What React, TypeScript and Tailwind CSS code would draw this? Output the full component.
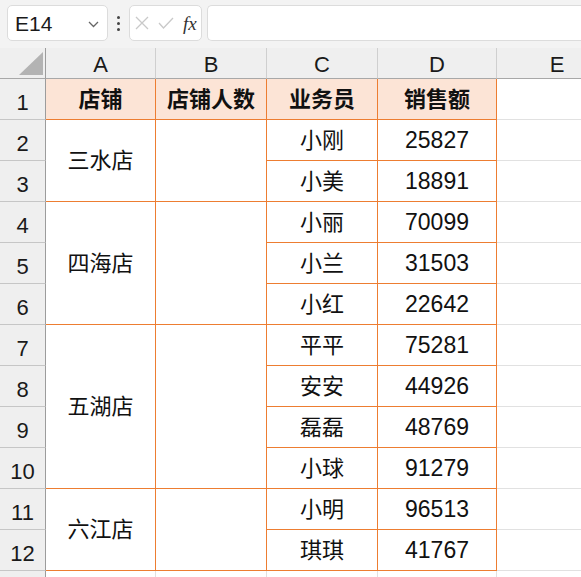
import React from 'react';

type Group = { store: string; people: [string, number][] };

const groups: Group[] = [
  { store: '三水店', people: [['小刚', 25827], ['小美', 18891]] },
  { store: '四海店', people: [['小丽', 70099], ['小兰', 31503], ['小红', 22642]] },
  { store: '五湖店', people: [['平平', 75281], ['安安', 44926], ['磊磊', 48769], ['小球', 91279]] },
  { store: '六江店', people: [['小明', 96513], ['琪琪', 41767]] },
];

const spanClass: Record<number, string> = {
  2: 'row-span-2',
  3: 'row-span-3',
  4: 'row-span-4',
};

const font = { fontFamily: '"Liberation Sans", "Noto Sans CJK SC", sans-serif' };

const rowHead =
  'flex items-center justify-center bg-[#efefef] border-r border-b border-r-[#9c9c9c] border-b-[#c6c6c6] text-[22px] text-[#1a1a1a] pt-[6px]';
const orangeCell =
  'flex items-center justify-center border-r border-b border-[#ed7d31] text-[22px] text-[#111]';
const blankCell = 'border-r border-b border-[#e1e1e1]';

function Toolbar() {
  return (
    <div className="h-[48px] bg-[#f3f3f3] flex items-start pt-[5px] pl-[7px]">
      <div className="w-[101px] h-[36px] bg-white border border-[#dcdcdc] rounded-[5px] flex items-center justify-between pl-[7px] pr-[8px]">
        <span className="text-[21px] text-[#1a1a1a] leading-none">E14</span>
        <svg width="11" height="7" viewBox="0 0 11 7" className="mt-[2px]">
          <path d="M1 1 L5.5 5.5 L10 1" fill="none" stroke="#666" strokeWidth="1.3" />
        </svg>
      </div>
      <div className="w-[21px] h-[36px] flex flex-col items-center justify-center gap-[3px]">
        <span className="w-[3px] h-[3px] bg-[#444] rounded-full" />
        <span className="w-[3px] h-[3px] bg-[#444] rounded-full" />
        <span className="w-[3px] h-[3px] bg-[#444] rounded-full" />
      </div>
      <div className="w-[73px] h-[36px] bg-white border border-[#dcdcdc] rounded-[5px] flex items-center pl-[5px] gap-[9px]">
        <svg width="14" height="14" viewBox="0 0 14 14">
          <path d="M1 1 L13 13 M13 1 L1 13" stroke="#c9c9c9" strokeWidth="1.3" />
        </svg>
        <svg width="16" height="12" viewBox="0 0 16 12">
          <path d="M1 6 L5.5 11 L15 1" fill="none" stroke="#c9c9c9" strokeWidth="1.3" />
        </svg>
        <span
          className="text-[19px] italic text-[#333] leading-none"
          style={{ fontFamily: '"Liberation Serif", serif' }}
        >
          fx
        </span>
      </div>
      <div className="ml-[5px] flex-1 h-[36px] bg-white border border-[#dcdcdc] border-r-0 rounded-l-[5px]" />
    </div>
  );
}

export default function App() {
  // data rows: row header, merged A/B on first row of a group, C, D, then blank E and F
  const cells: React.ReactNode[] = [];
  let rowNo = 2;
  groups.forEach((g) => {
    g.people.forEach(([name, amount], i) => {
      cells.push(
        <div key={`h${rowNo}`} className={rowHead}>
          {rowNo}
        </div>
      );
      if (i === 0) {
        cells.push(
          <div key={`a${rowNo}`} className={`${orangeCell} ${spanClass[g.people.length]}`}>
            {g.store}
          </div>
        );
        cells.push(
          <div key={`b${rowNo}`} className={`${orangeCell} ${spanClass[g.people.length]}`} />
        );
      }
      cells.push(
        <div key={`c${rowNo}`} className={orangeCell}>
          {name}
        </div>
      );
      cells.push(
        <div key={`d${rowNo}`} className={`${orangeCell} text-[23px]`}>
          {amount}
        </div>
      );
      cells.push(<div key={`e${rowNo}`} className={blankCell} />);
      cells.push(<div key={`f${rowNo}`} className={blankCell} />);
      rowNo++;
    });
  });

  return (
    <div className="w-[581px] h-[577px] overflow-hidden bg-white" style={font}>
      <Toolbar />
      <div className="grid w-[640px] grid-cols-[46px_110px_111px_111px_119px_121px_1fr] grid-rows-[31px_repeat(13,41px)]">
        {/* column headers */}
        <div className="relative bg-[#efefef] border-r border-b border-r-[#9c9c9c] border-b-[#a8a8a8]">
          <svg width="24" height="24" viewBox="0 0 24 24" className="absolute left-[19px] top-[4px]">
            <path d="M24 0 L24 23 L0 23 Z" fill="#b3b3b3" />
          </svg>
        </div>
        {['A', 'B', 'C', 'D', 'E', ''].map((c, i) => (
          <div
            key={i}
            className="flex items-center justify-center bg-[#efefef] border-r border-b border-r-[#cfcfcf] border-b-[#a8a8a8] text-[22px] text-[#1a1a1a] pt-[3px]"
          >
            {c}
          </div>
        ))}

        {/* row 1 */}
        <div className={rowHead}>1</div>
        {['店铺', '店铺人数', '业务员', '销售额'].map((t) => (
          <div key={t} className={`${orangeCell} bg-[#fce4d6] font-bold`}>
            {t}
          </div>
        ))}
        <div className={blankCell} />
        <div className={blankCell} />

        {cells}

        {/* row 13, only its top edge shows */}
        <div className="bg-[#efefef] border-r border-r-[#9c9c9c]" />
        <div className={blankCell} />
        <div className={blankCell} />
        <div className={blankCell} />
        <div className={blankCell} />
        <div className={blankCell} />
        <div className={blankCell} />
      </div>
    </div>
  );
}
